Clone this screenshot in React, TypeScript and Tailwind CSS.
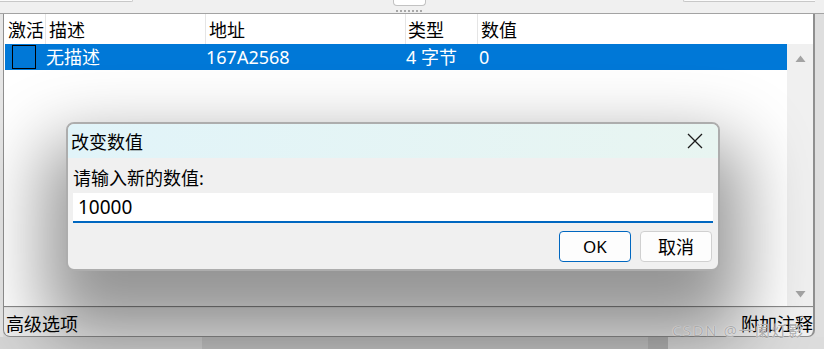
const FONT = "font-['Noto_Sans','Noto_Sans_CJK_SC',sans-serif]";

function UpArrow() {
  return (
    <svg width="11" height="7" viewBox="0 0 11 7">
      <polygon points="0.5,7 5.5,0.5 10.5,7" fill="#a3a3a3" />
    </svg>
  );
}

function DownArrow() {
  return (
    <svg width="11" height="7" viewBox="0 0 11 7">
      <polygon points="0.5,0 10.5,0 5.5,6.5" fill="#a3a3a3" />
    </svg>
  );
}

function ValueDialog() {
  return (
    <div className="absolute left-[66px] top-[122px] z-10 w-[654px] h-[149px] flex flex-col rounded-[8px] border-2 border-[#adadad] bg-[#f0f0f0] overflow-hidden shadow-[0_42px_70px_22px_rgba(0,0,0,0.42)]">
      {/* title bar */}
      <div className="h-[34px] flex items-center justify-between pl-[3px] pr-[15px] bg-linear-to-r from-[#e1f4f9] to-[#e8f5f1]">
        <span className="text-[18px] leading-none pt-[1px]">改变数值</span>
        <svg width="16" height="16" viewBox="0 0 16 16">
          <path d="M1 1L15 15M15 1L1 15" stroke="#1b1b1b" strokeWidth="1.3" />
        </svg>
      </div>
      {/* body */}
      <div className="flex flex-col pl-[5px] pr-[5px] pt-[10px]">
        <div className="h-[20px] text-[18px] leading-[20px]">请输入新的数值:</div>
        <div className="mt-[5px] h-[30px] bg-white border-b-2 border-[#0067c0] flex items-center pl-[5px] text-[19px]">
          10000
        </div>
        <div className="mt-[8px] flex justify-end gap-[9px] pr-[1px]">
          <button className="w-[72px] h-[31px] rounded-[4px] border border-[#0067c0] bg-[#fdfdfd] text-[17px] leading-none">
            OK
          </button>
          <button className="w-[72px] h-[31px] rounded-[4px] border border-[#d0d0d0] bg-[#fdfdfd] text-[18px] leading-none">
            取消
          </button>
        </div>
      </div>
    </div>
  );
}

export default function App() {
  return (
    <div className={`relative w-[824px] h-[349px] overflow-hidden bg-[#dcdcdc] text-black ${FONT}`}>
      {/* top strip with splitter */}
      <div className="h-[14px] bg-[#f0f0f0] border-b border-[#a3a3a3] flex">
        <div className="w-[133px] h-[2px] border-b border-r border-[#c8c8c8] rounded-br-[3px] bg-[#fbfbfb]" />
        <div className="ml-[260px] w-[33px] flex flex-col items-center">
          <div className="w-[33px] h-[6px] border border-t-0 border-[#c2c2c2] rounded-b-[4px] bg-white" />
          <div className="mt-[4px] w-[28px] h-[2px] bg-[repeating-linear-gradient(90deg,#a8a8a8_0_2px,transparent_2px_4px)]" />
        </div>
        <div className="ml-[257px] w-[132px] h-[2px] border-b border-l border-[#c8c8c8] rounded-bl-[3px] bg-[#fbfbfb]" />
      </div>

      <div className="flex">
        <div className="w-[3px] h-[323px] bg-[#e6e6e6]" />
        {/* window */}
        <div className="w-[812px] h-[323px] flex flex-col bg-[#f0f0f0] border-l border-r-2 border-b border-[#8f8f8f] rounded-b-[7px]">
          {/* list */}
          <div className="h-[293px] bg-white border-b border-[#8a8a8a] flex flex-col">
            <div className="h-[30px] flex text-[18px] leading-none">
              <div className="w-[42px] h-full border-r border-[#e5e5e5] flex items-center pl-[4px] pt-[2px]">激活</div>
              <div className="w-[160px] h-full border-r border-[#e5e5e5] flex items-center pl-[3px] pt-[2px]">描述</div>
              <div className="w-[200px] h-full border-r border-[#e5e5e5] flex items-center pl-[3px] pt-[2px]">地址</div>
              <div className="w-[72px] h-full border-r border-[#e5e5e5] flex items-center pl-[2px] pt-[2px]">类型</div>
              <div className="flex-1 h-full flex items-center pl-[3px] pt-[2px]">数值</div>
            </div>
            <div className="flex-1 flex">
              <div className="flex-1">
                <div className="ml-px h-[26px] bg-[#0078d7] text-white flex items-center text-[18px] leading-none">
                  <div className="w-[41px] h-full flex items-center">
                    <div className="ml-[7px] w-[24px] h-[24px] border border-black" />
                  </div>
                  <div className="w-[160px]">无描述</div>
                  <div className="w-[200px]">167A2568</div>
                  <div className="w-[72px]">4 字节</div>
                  <div className="flex-1 pl-px">0</div>
                </div>
              </div>
              <div className="w-[26px] bg-[#f0f0f0] flex flex-col items-center justify-between pt-[11px] pb-[8px]">
                <UpArrow />
                <DownArrow />
              </div>
            </div>
          </div>
          {/* status bar */}
          <div className="flex-1 border-t border-[#e4e4e4] flex items-center justify-between pl-[2px] pt-[3px] text-[18px] leading-none">
            <span>高级选项</span>
            <span>附加注释</span>
          </div>
        </div>
        <div className="flex-1 bg-[#dedede]" />
      </div>

      {/* strip below the window */}
      <div className="h-[12px] flex">
        <div className="w-[202px] bg-[#d6d6d6]" />
        <div className="w-[446px] bg-[#c6c6c6]" />
        <div className="w-[20px] bg-[#b6b6b6]" />
        <div className="flex-1 bg-[#dcdcdc]" />
      </div>

      <ValueDialog />

      {/* watermark */}
      <div className="absolute left-[672px] top-[323px] z-20 text-[15px] leading-none tracking-[1.5px] text-[#acacac] [text-shadow:0_0_1px_#ffffff]">
        CSDN @一阑灯影
      </div>
    </div>
  );
}
